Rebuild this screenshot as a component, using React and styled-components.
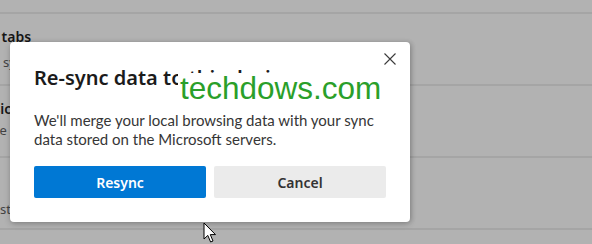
import styled, { createGlobalStyle } from "styled-components";

const GlobalStyle = createGlobalStyle`
  html, body {
    margin: 0;
    padding: 0;
    overflow: hidden;
    background: #ffffff;
    font-family: "Noto Sans", "Open Sans", sans-serif;
  }
`;

// rows of the settings page that sits behind the dialog
const rows = [
  { title: "Open tabs", titleX: -39, desc: "sync open tabs across devices", descX: 3, descGap: 8 },
  { title: "Basic", titleX: -24, desc: "Save the preferences", descX: -45, descGap: 4 },
  { title: null, desc: "Last synced", descX: -14, descGap: 11 },
];

export default function App() {
  return (
    <>
      <GlobalStyle />
      <Page>
        <SettingsList>
          {rows.map((r, i) => (
            <SettingRow key={i}>
              {r.title ? <RowTitle $x={r.titleX}>{r.title}</RowTitle> : <RowSpacer />}
              <RowDesc $x={r.descX} $gap={r.descGap}>{r.desc}</RowDesc>
            </SettingRow>
          ))}
        </SettingsList>
        <Overlay />
        <Dialog role="dialog" aria-labelledby="resync-title">
          <CloseButton aria-label="Close">
            <svg width="12" height="12" viewBox="0 0 12 12">
              <path d="M0.5 0.5 L11.5 11.5 M11.5 0.5 L0.5 11.5" stroke="#3b3b3b" strokeWidth="1.1" fill="none" />
            </svg>
          </CloseButton>
          <Title id="resync-title">Re-sync data to this device</Title>
          <Body>
            We'll merge your local browsing data with your sync data stored on the Microsoft servers.
          </Body>
          <Actions>
            <Button $primary>Resync</Button>
            <Button>Cancel</Button>
          </Actions>
          <Watermark>techdows.com</Watermark>
        </Dialog>
        <Cursor width="14" height="22" viewBox="0 0 14 22">
          <path d="M1 1 L1 17 L4.8 13.4 L7.6 20 L10 19 L7.3 12.6 L12.5 12.6 Z" fill="#ffffff" stroke="#000000" strokeWidth="1" strokeLinejoin="round" />
        </Cursor>
      </Page>
    </>
  );
}

const Page = styled.div`
  position: relative;
  width: 592px;
  height: 244px;
  overflow: hidden;
  background: #ffffff;
`;

const SettingsList = styled.div`
  display: flex;
  flex-direction: column;
  padding-top: 12px;
`;

const SettingRow = styled.div`
  height: 72px;
  box-sizing: border-box;
  border-top: 2px solid #ececec;
  padding-top: 14px;
  display: flex;
  flex-direction: column;
  overflow: hidden;

  &:last-child {
    border-bottom: 2px solid #ececec;
    height: 74px;
  }
`;

const RowTitle = styled.div`
  margin-left: ${(p) => p.$x}px;
  font-size: 14px;
  line-height: 18px;
  font-weight: 600;
  color: #1f1f1f;
  white-space: nowrap;
`;

const RowSpacer = styled.div`
  height: 18px;
`;

const RowDesc = styled.div`
  margin-left: ${(p) => p.$x}px;
  margin-top: ${(p) => p.$gap}px;
  font-size: 13px;
  line-height: 16px;
  color: #616161;
  white-space: nowrap;
`;

const Overlay = styled.div`
  position: absolute;
  inset: 0;
  background: rgba(0, 0, 0, 0.3);
`;

const Dialog = styled.div`
  position: absolute;
  left: 10px;
  top: 42px;
  width: 400px;
  height: 180px;
  box-sizing: border-box;
  padding: 21px 24px 24px;
  background: #ffffff;
  border-radius: 4px;
  box-shadow: 0 2px 6px rgba(0, 0, 0, 0.22), 2px 0 4px rgba(0, 0, 0, 0.12);
  display: flex;
  flex-direction: column;
`;

const CloseButton = styled.button`
  position: absolute;
  top: 11px;
  right: 14px;
  width: 12px;
  height: 12px;
  padding: 0;
  border: none;
  background: none;
  display: flex;
`;

const Title = styled.h2`
  margin: 0;
  font-size: 20px;
  line-height: 29px;
  font-weight: 600;
  color: #1b1b1b;
`;

const Body = styled.p`
  margin: 19px 0 0;
  font-family: Lato, "Noto Sans", sans-serif;
  font-size: 15px;
  line-height: 19px;
  color: #363636;
`;

const Actions = styled.div`
  margin-top: auto;
  display: grid;
  grid-template-columns: 1fr 1fr;
  gap: 8px;
`;

const Button = styled.button`
  height: 32px;
  border: none;
  border-radius: 2px;
  font-family: "Noto Sans", "Open Sans", sans-serif;
  font-size: 14px;
  font-weight: 600;
  background: ${(p) => (p.$primary ? "#0078d4" : "#ebebeb")};
  color: ${(p) => (p.$primary ? "#ffffff" : "#333333")};
`;

const Watermark = styled.span`
  position: absolute;
  left: 168px;
  top: 31px;
  padding: 0 4px 4px 2px;
  background: #ffffff;
  font-family: "Liberation Sans", Arial, sans-serif;
  font-size: 31.5px;
  line-height: 1;
  color: #2a9f2a;
`;

const Cursor = styled.svg`
  position: absolute;
  left: 203px;
  top: 222px;
`;
